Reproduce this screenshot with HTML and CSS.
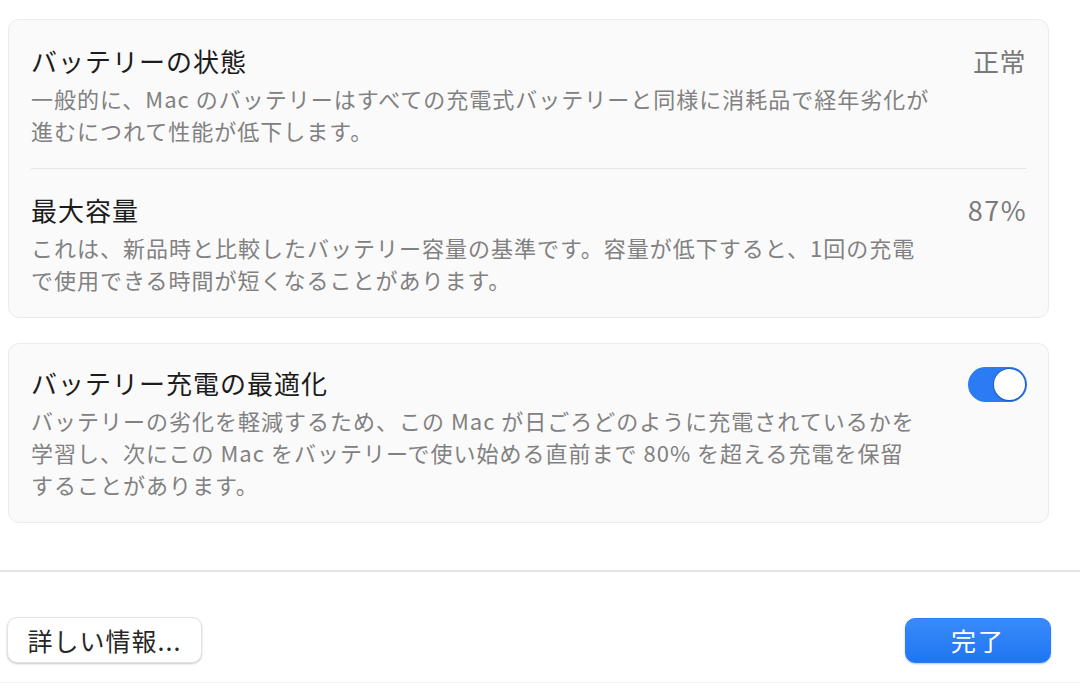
FILE: index.html
```html
<!DOCTYPE html>
<html lang="ja">
<head>
<meta charset="utf-8">
<title>バッテリーの状態</title>
<link rel="stylesheet" href="styles.css">
</head>
<body>
<div class="sheet">
  <div class="card">
    <div class="row">
      <div class="text">
        <div class="title">バッテリーの状態</div>
        <div class="desc">一般的に、Mac のバッテリーはすべての充電式バッテリーと同様に消耗品で経年劣化が<br>進むにつれて性能が低下します。</div>
      </div>
      <div class="value">正常</div>
    </div>
    <div class="sep"></div>
    <div class="row">
      <div class="text">
        <div class="title">最大容量</div>
        <div class="desc">これは、新品時と比較したバッテリー容量の基準です。容量が低下すると、1回の充電<br>で使用できる時間が短くなることがあります。</div>
      </div>
      <div class="value value-num">87%</div>
    </div>
  </div>

  <div class="card card-second">
    <div class="row">
      <div class="text">
        <div class="title">バッテリー充電の最適化</div>
        <div class="desc">バッテリーの劣化を軽減するため、この Mac が日ごろどのように充電されているかを<br>学習し、次にこの Mac をバッテリーで使い始める直前まで 80% を超える充電を保留<br>することがあります。</div>
      </div>
      <div class="toggle"><div class="knob"></div></div>
    </div>
  </div>
</div>

<div class="divider"></div>

<div class="footer">
  <button class="btn">詳しい情報...</button>
  <button class="btn btn-primary">完了</button>
</div>
<div class="bottom-line"></div>
</body>
</html>
```

FILE: styles.css
```css
html, body {
  margin: 0;
  padding: 0;
  background: #ffffff;
  font-family: "Noto Sans CJK JP", "Noto Sans", sans-serif;
}

body {
  width: 1080px;
  height: 683px;
  overflow: hidden;
  display: flex;
  flex-direction: column;
}

.sheet {
  padding: 19px 31px 0 8px;
  display: flex;
  flex-direction: column;
  gap: 25px;
}

.card {
  background: #fafafa;
  border: 1px solid #ebebeb;
  border-radius: 11px;
  padding: 0 22px;
}

.row {
  display: flex;
  justify-content: space-between;
  align-items: flex-start;
  padding: 25px 0 22px;
}

.card-second .row {
  padding: 23px 0 22px;
}

.text {
  display: flex;
  flex-direction: column;
  gap: 5px;
}

.title {
  font-size: 26px;
  line-height: 32px;
  font-weight: 400;
  color: #1c1c1c;
  letter-spacing: 1px;
  white-space: nowrap;
}

.desc {
  font-size: 22px;
  line-height: 32px;
  color: #818181;
  letter-spacing: 1px;
  white-space: nowrap;
}

.value {
  font-size: 26px;
  line-height: 32px;
  color: #7a7a7a;
  letter-spacing: 0.5px;
  white-space: nowrap;
}

.value-num {
  font-size: 27px;
  letter-spacing: 1.5px;
  margin-right: -1px;
}

.sep {
  height: 1px;
  background: #e6e6e6;
}

.toggle {
  width: 59px;
  height: 35px;
  border-radius: 18px;
  background: #2a7bf4;
  display: flex;
  align-items: center;
  justify-content: flex-end;
  padding: 0 2px;
  box-sizing: border-box;
  margin-right: -1px;
}

.knob {
  width: 31px;
  height: 31px;
  border-radius: 50%;
  background: #ffffff;
  box-shadow: 0 0 0 1px rgba(20, 70, 150, 0.45), 0 1px 2px rgba(0, 0, 0, 0.2);
}

.divider {
  margin-top: 47px;
  height: 2px;
  background: #e4e4e4;
}

.footer {
  display: flex;
  justify-content: space-between;
  align-items: center;
  padding: 45px 29px 0 7px;
}

.btn {
  font-family: "Noto Sans CJK JP", "Noto Sans", sans-serif;
  font-size: 25px;
  line-height: 30px;
  color: #262626;
  background: #ffffff;
  border: 1px solid #e2e2e2;
  border-radius: 10px;
  box-shadow: 0 1px 2px rgba(0, 0, 0, 0.22);
  width: 195px;
  height: 46px;
  padding: 0;
  letter-spacing: 1px;
}

.btn-primary {
  width: 146px;
  height: 45px;
  color: #ffffff;
  background: linear-gradient(#3a8bfa, #1f75f2);
  border: 1px solid #2c7ef3;
  box-shadow: 0 1px 2px rgba(0, 60, 160, 0.3);
  letter-spacing: 2px;
}

.bottom-line {
  margin-top: auto;
  height: 1px;
  background: #f0f0f0;
}
```
